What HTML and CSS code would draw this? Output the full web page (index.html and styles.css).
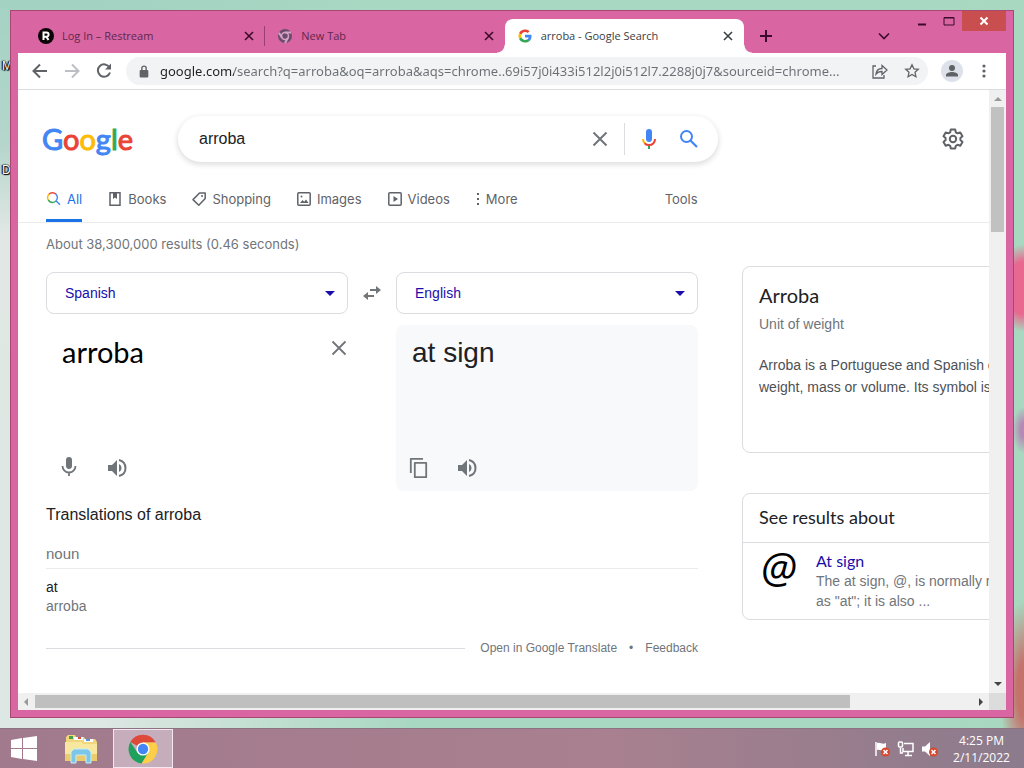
FILE: index.html
```html
<!DOCTYPE html>
<html lang="en">
<head>
    <meta charset="UTF-8">
    <meta name="viewport" content="width=device-width, initial-scale=1.0">
    <title>arroba - Google Search</title>
    <link rel="stylesheet" href="styles.css">
</head>
<body>
    <div class="desktop">
        <span class="shortcut first">M</span>
        <span class="shortcut second">D</span>

        <div class="window">
            <div class="titlebar">
                <div class="tabs">
                    <div class="tab">
                        <svg class="favicon" viewBox="0 0 16 16"><circle cx="8" cy="8" r="8" fill="#0b0508"/><path d="M5.500 12V4.500h3a2 2 0 0 1 0 4.200h-3M8.300 8.600l2.200 3.400" fill="none" stroke="#fff" stroke-width="2"/></svg>
                        <span class="name">Log In – Restream</span>
                        <button class="close" aria-label="Close tab"><svg viewBox="0 0 10 10"><path d="M1 1l8 8M9 1L1 9"/></svg></button>
                    </div>
                    <div class="tab">
                        <svg class="favicon" viewBox="0 0 16 16"><circle cx="8" cy="8" r="7" fill="#6c4c6e"/><circle cx="8" cy="8" r="3.500" fill="#6c4c6e" stroke="#d7a3c4" stroke-width="1.500"/><path d="M8 4.500h6M5 9.700L2 4.800M11 9.700L8 15" stroke="#d7a3c4"/></svg>
                        <span class="name">New Tab</span>
                        <button class="close" aria-label="Close tab"><svg viewBox="0 0 10 10"><path d="M1 1l8 8M9 1L1 9"/></svg></button>
                    </div>
                    <div class="tab active">
                        <svg class="favicon" viewBox="0 0 54 54"><path fill="#ea4335" d="M27 13.500c3.500 0 6.600 1.200 9 3.600l6.500-6.500C38.500 7 33.200 5 27 5 18 5 10.500 10 7 17l7.500 6c2-5.500 7-9.500 12.500-9.500z"/><path fill="#4285f4" d="M49 27.500c0-1.600-.2-3.200-.5-4.500H27v9h12.300c-.6 3-2.300 5.300-4.700 7l7.300 5.700C46.300 40.600 49 34.500 49 27.500z"/><path fill="#fbbc05" d="M14.500 31.500a13.500 13.500 0 0 1 0-8.500L7 17a22 22 0 0 0 0 20z"/><path fill="#34a853" d="M27 49c6 0 11-2 14.900-5.300L34.600 38c-2 1.400-4.600 2.200-7.600 2.200-5.700 0-10.600-3.700-12.500-8.700L7 37c3.600 7.200 11.200 12 20 12z"/></svg>
                        <span class="name">arroba - Google Search</span>
                        <button class="close" aria-label="Close tab"><svg viewBox="0 0 10 10"><path d="M1 1l8 8M9 1L1 9"/></svg></button>
                    </div>
                </div>
                <button class="new-tab" aria-label="New tab"><svg viewBox="0 0 12 12"><path d="M6 0v12M0 6h12"/></svg></button>
                <button class="tab-search" aria-label="Search tabs"><svg viewBox="0 0 10 6"><path d="M0 0.500l5 5 5-5"/></svg></button>
                <div class="controls">
                    <button aria-label="Minimize"><svg viewBox="0 0 12 10"><path d="M2 8.500h8" stroke-width="2"/></svg></button>
                    <button aria-label="Maximize"><svg viewBox="0 0 12 10"><path d="M1 1.500h10V9H1zM1 2h10"/></svg></button>
                    <button class="exit" aria-label="Close"><svg viewBox="0 0 12 10"><path d="M2.500 1.500l7 7M9.500 1.500l-7 7" stroke-width="2"/></svg></button>
                </div>
            </div>

            <div class="toolbar">
                <button aria-label="Back"><svg viewBox="0 0 16 16"><path d="M15 8H2M8 1.500L1.500 8 8 14.500"/></svg></button>
                <button class="off" aria-label="Forward"><svg viewBox="0 0 16 16"><path d="M1 8h13M8 1.500L14.500 8 8 14.500"/></svg></button>
                <button aria-label="Reload"><svg viewBox="0 0 16 16"><path d="M13.500 4.500A6.200 6.200 0 1 0 14 9.500"/><path d="M15 0.500v6H9z" class="solid"/></svg></button>
                <div class="omnibox">
                    <svg class="lock" viewBox="0 0 10 12"><rect x="1" y="4.500" width="8" height="7" rx="1"/><path d="M3 5V3a2 2 0 0 1 4 0v2" fill="none" stroke="#5f6368" stroke-width="1.300"/></svg>
                    <input type="text" aria-label="Address" value="google.com/search?q=arroba&amp;oq=arroba&amp;aqs=chrome..69i57j0i433i512l2j0i512l7.2288j0j7&amp;sourceid=chrome...">
                    <button aria-label="Share"><svg viewBox="0 0 16 16"><path d="M4 3H1v12h11v-3M4 11c.5-4 3-5.500 6-5.500V2.500l5 4.500-5 4.500v-3C7.500 8.500 5.500 9 4 11z" class="thin"/></svg></button>
                    <button aria-label="Bookmark"><svg viewBox="0 0 16 16"><path d="M8 1.800l1.900 4 4.400.5-3.300 3 .9 4.400L8 11.500l-3.900 2.200.9-4.400-3.300-3 4.400-.5z" class="thin"/></svg></button>
                </div>
                <button class="avatar" aria-label="Profile"><svg viewBox="0 0 22 22"><circle cx="11" cy="11" r="11" fill="#dde1ea" stroke="none"/><circle cx="11" cy="8" r="3" class="solid"/><path d="M5 16.500v-1.500c0-2 3.500-3 6-3s6 1 6 3v1.500z" class="solid"/></svg></button>
                <button aria-label="Menu"><svg viewBox="0 0 16 16"><circle cx="8" cy="3" r="1.600" class="solid"/><circle cx="8" cy="8" r="1.600" class="solid"/><circle cx="8" cy="13" r="1.600" class="solid"/></svg></button>
            </div>

            <div class="viewport">
                <div class="page">
                    <header class="header">
                        <a class="logo" href="#" aria-label="Google"><span class="b">G</span><span class="r">o</span><span class="y">o</span><span class="b">g</span><span class="g">l</span><span class="r">e</span></a>
                        <form class="search">
                            <input type="text" aria-label="Search" value="arroba">
                            <button type="reset" aria-label="Clear"><svg viewBox="0 0 24 24"><path d="M5.500 5.500l13 13M18.500 5.500l-13 13" fill="none" stroke="#70757a" stroke-width="2"/></svg></button>
                            <button type="button" class="voice" aria-label="Search by voice"><svg viewBox="0 0 24 24"><path fill="#4285f4" d="M12 15c1.700 0 3-1.300 3-3V5a3 3 0 0 0-6 0v7c0 1.700 1.300 3 3 3z"/><path fill="#34a853" d="M11 18.500h2V22h-2z"/><path fill="none" stroke="#fbbc05" stroke-width="2" d="M6 12c0 2 .8 3.500 2 4.600"/><path fill="none" stroke="#ea4335" stroke-width="2" d="M7.600 16.200C10 18.700 14 18.700 16.400 16.200 17.500 15 18 13.700 18 12"/></svg></button>
                            <button type="submit" aria-label="Search"><svg viewBox="0 0 24 24"><circle cx="9.500" cy="9.500" r="5.500" fill="none" stroke="#4285f4" stroke-width="2"/><path d="M13.500 13.500l6.500 6.500" stroke="#4285f4" stroke-width="2.200"/></svg></button>
                        </form>
                        <button class="settings" aria-label="Settings"><svg viewBox="0 0 24 24"><path d="M9.800 2.500h4.400l.6 2.800 1.800 1 2.700-.9 2.200 3.800-2.100 1.900v1.900l2.100 1.900-2.200 3.800-2.700-.9-1.800 1-.6 2.700H9.800l-.6-2.700-1.800-1-2.700.9-2.200-3.800 2.100-1.900v-1.900L2.500 9.200l2.200-3.800 2.700.9 1.800-1z" fill="none" stroke="#5f6368" stroke-width="2" stroke-linejoin="round"/><circle cx="12" cy="12" r="3.200" fill="none" stroke="#5f6368" stroke-width="2"/></svg></button>
                    </header>

                    <nav class="nav">
                        <a class="current" href="#"><svg viewBox="0 0 16 16" fill="none" stroke-width="1.500"><path d="M2.300 9A4.800 4.800 0 0 1 3 3.300" stroke="#fbbc05"/><path d="M3 3.300A4.800 4.800 0 0 1 9.800 3.100" stroke="#ea4335"/><path d="M9.800 3.100a4.800 4.800 0 0 1 .4 6.500" stroke="#4285f4"/><path d="M10.200 9.600A4.800 4.800 0 0 1 2.300 9" stroke="#34a853"/><path d="M10 9.800l4 4" stroke="#4285f4"/></svg>All</a>
                        <a href="#"><svg viewBox="0 0 16 16"><path d="M3 1.700h10v12.600H3z"/><path d="M6 2h4v6L8 6.500 6 8z" class="solid"/></svg>Books</a>
                        <a href="#"><svg viewBox="0 0 16 16"><path d="M8.500 2h5.700v5.500l-6.400 6.700L2 8.600z" stroke-linejoin="round"/><circle cx="11" cy="5" r="1" class="solid"/></svg>Shopping</a>
                        <a href="#"><svg viewBox="0 0 16 16"><rect x="1.800" y="1.800" width="12.400" height="12.400" rx="1"/><path d="M4 12l2.500-3 1.700 1.700L10 8.500l2.500 3.500z" class="solid"/><circle cx="5.500" cy="5.500" r="1" class="solid"/></svg>Images</a>
                        <a href="#"><svg viewBox="0 0 16 16"><rect x="1.800" y="1.800" width="12.400" height="12.400" rx="1"/><path d="M6.500 5v6L11 8z" class="solid"/></svg>Videos</a>
                        <a class="more" href="#"><svg viewBox="0 0 6 16"><path d="M2 2h2v2H2zM2 7h2v2H2zM2 12h2v2H2z" class="solid"/></svg>More</a>
                        <a class="tools" href="#">Tools</a>
                    </nav>

                    <div class="columns">
                        <main class="results">
                            <p class="stats">About 38,300,000 results (0.46 seconds)</p>

                            <div class="languages">
                                <div class="picker">
                                    <select aria-label="Source language"><option>Spanish</option></select>
                                    <svg viewBox="0 0 10 5"><path d="M0 0h10L5 5z"/></svg>
                                </div>
                                <button class="swap" aria-label="Swap languages"><svg viewBox="0 0 20 16"><path d="M8 4h6V1l5 4-5 4V6H8zM12 10H6V7l-5 4 5 4v-3h6z"/></svg></button>
                                <div class="picker">
                                    <select aria-label="Target language"><option>English</option></select>
                                    <svg viewBox="0 0 10 5"><path d="M0 0h10L5 5z"/></svg>
                                </div>
                            </div>

                            <div class="translate">
                                <div class="source">
                                    <div class="entry">
                                        <textarea aria-label="Text to translate" rows="1">arroba</textarea>
                                        <button aria-label="Clear text"><svg viewBox="0 0 24 24"><path d="M5.500 5.500l13 13M18.500 5.500l-13 13" fill="none" stroke="#70757a" stroke-width="1.800"/></svg></button>
                                    </div>
                                    <div class="actions">
                                        <button aria-label="Speak"><svg viewBox="0 0 24 24"><path d="M12 13c1.700 0 3-1.300 3-3V4a3 3 0 0 0-6 0v6c0 1.700 1.300 3 3 3z"/><path d="M5.500 10a6.500 6.500 0 0 0 13 0M12 16v4" fill="none" stroke="#70757a" stroke-width="1.800"/></svg></button>
                                        <button aria-label="Listen"><svg viewBox="0 0 24 24"><path d="M3 9v6h4l5 5V4L7 9zM14 8v8c1.500-.7 2.500-2.200 2.500-4S15.500 8.700 14 8z"/><path d="M14 4c4 1 6.500 4 6.500 8s-2.500 7-6.500 8" fill="none" stroke="#70757a" stroke-width="2"/></svg></button>
                                    </div>
                                </div>
                                <div class="target">
                                    <div class="output">at sign</div>
                                    <div class="actions">
                                        <button aria-label="Copy"><svg viewBox="0 0 24 24"><path d="M3.800 17V2.800H16M7.800 6.800h11.400v14.400H7.800z" fill="none" stroke="#70757a" stroke-width="1.800" stroke-linejoin="round"/></svg></button>
                                        <button aria-label="Listen"><svg viewBox="0 0 24 24"><path d="M3 9v6h4l5 5V4L7 9zM14 8v8c1.500-.7 2.500-2.200 2.500-4S15.500 8.700 14 8z"/><path d="M14 4c4 1 6.500 4 6.500 8s-2.500 7-6.500 8" fill="none" stroke="#70757a" stroke-width="2"/></svg></button>
                                    </div>
                                </div>
                            </div>

                            <h3 class="subtitle">Translations of arroba</h3>
                            <p class="kind">noun</p>
                            <dl class="words">
                                <dt>at</dt>
                                <dd>arroba</dd>
                            </dl>
                            <div class="links">
                                <a href="#">Open in Google Translate</a>
                                <span>•</span>
                                <a href="#">Feedback</a>
                            </div>
                        </main>

                        <aside class="side">
                            <section class="card about">
                                <h2>Arroba</h2>
                                <p class="type">Unit of weight</p>
                                <p class="text">Arroba is a Portuguese and Spanish custom unit of weight, mass or volume. Its symbol is @.</p>
                            </section>
                            <section class="card related">
                                <h2>See results about</h2>
                                <div class="item">
                                    <div class="thumb">@</div>
                                    <div>
                                        <a href="#">At sign</a>
                                        <p>The at sign, @, is normally read aloud<br>as "at"; it is also ...</p>
                                    </div>
                                </div>
                            </section>
                        </aside>
                    </div>
                </div>

                <div class="scroll vertical">
                    <svg class="dim" viewBox="0 0 8 4"><path d="M0 4h8L4 0z"/></svg>
                    <div class="track"><div class="bar"></div></div>
                    <svg viewBox="0 0 8 4"><path d="M0 0h8L4 4z"/></svg>
                </div>
                <div class="scroll horizontal">
                    <svg class="dim" viewBox="0 0 4 8"><path d="M4 0v8L0 4z"/></svg>
                    <div class="track"><div class="bar"></div></div>
                    <svg viewBox="0 0 4 8"><path d="M0 0v8l4-4z"/></svg>
                </div>
                <div class="corner"></div>
            </div>
        </div>
    </div>

    <footer class="taskbar">
        <button class="start" aria-label="Start"><svg viewBox="0 0 28 28"><path d="M1 5l11-2v10H1zM13 3l14-2v12H13zM1 14h11v10L1 22zM13 14h14v12l-14-2z" fill="#fff"/></svg></button>
        <button class="files" aria-label="File Explorer"><svg viewBox="0 0 32 30"><path d="M1 3l2-2h7l1 2h8l1 2h10l2 3v18H1z" fill="#f0d67c"/><path d="M4 2h4v3H4z" fill="#4b9e4a"/><path d="M9 3h9v3H9z" fill="#fff"/><path d="M13 3h3v2h-3z" fill="#d5533d"/><path d="M19 5h9v3h-9z" fill="#fff"/><path d="M21 5h4v2h-4z" fill="#5a96d5"/><path d="M0 8h16l2 2h14v17H0z" fill="#f8e79f"/><path d="M0 20h32v7H0z" fill="#eccb6b"/><path d="M6 29V18l3-3h14l3 3v11h-5v-8H11v8z" fill="#7cc7e8" stroke="#c9ecf8"/></svg></button>
        <button class="chrome" aria-label="Google Chrome"><svg viewBox="0 0 32 32"><path d="M16 16L2.500 8.500A15.500 15.500 0 0 1 29.600 9L16 9z" fill="#de4a3a"/><path d="M2.500 8.500a15.500 15.500 0 0 0 12 23L22 19.500 16 16 9.900 19.500z" fill="#1fa05c"/><path d="M29.600 9H16l6 10.500-7.500 12A15.500 15.500 0 0 0 29.600 9z" fill="#fdce47"/><circle cx="16" cy="16" r="7" fill="#fff"/><circle cx="16" cy="16" r="5.500" fill="#4285f4"/></svg></button>
        <div class="tray">
            <svg viewBox="0 0 18 18"><path d="M3 2v14" stroke="#fff" stroke-width="1.500"/><path d="M4 3c4-1 5 2 9 0v7c-4 2-5-1-9 0z" fill="#fff"/><circle cx="12.500" cy="12" r="4.500" fill="#d8472f"/><path d="M10.500 10l4 4M14.500 10l-4 4" stroke="#fff" stroke-width="1.500"/></svg>
            <svg viewBox="0 0 18 18" fill="none" stroke="#fff" stroke-width="1.500"><path d="M7 3.500h9v8H6V8M8 15.500h7M11 12v3M3.500 8v5H6"/><rect x="1.500" y="2" width="4" height="5" rx="1"/></svg>
            <svg viewBox="0 0 18 18"><path d="M1 6.500h3L9 2v14l-5-4.500H1z" fill="#fff"/><circle cx="12.500" cy="12" r="4.500" fill="#d8472f"/><path d="M10.500 10l4 4M14.500 10l-4 4" stroke="#fff" stroke-width="1.500"/></svg>
        </div>
        <div class="clock"><span>4:25 PM</span><span>2/11/2022</span></div>
    </footer>
</body>
</html>
```
FILE: styles.css
```css
* {
    box-sizing: border-box;
}
body {
    margin: 0;
    height: 100vh;
    display: flex;
    flex-direction: column;
    font-family: "Liberation Sans", Arial, sans-serif;
    font-size: 14px;
    color: #202124;
}
button {
    display: flex;
    align-items: center;
    justify-content: center;
    padding: 0;
    border: 0;
    background: none;
}
input, select, textarea {
    border: 0;
    outline: 0;
    background: none;
    font-family: inherit;
}
a {
    text-decoration: none;
}
h2, h3, p, dl, dd {
    margin: 0;
    font-weight: normal;
}

/* desktop */
.desktop {
    position: relative;
    flex: 1;
    min-height: 0;
    padding: 10px;
    background:
        radial-gradient(ellipse 30px 44px at 100% 288px, #e8698f 60%, transparent),
        radial-gradient(ellipse 12px 24px at 100% 430px, #b58ab5 30%, transparent),
        radial-gradient(ellipse 24px 90px at 100% 690px, #c4736c 30%, transparent),
        linear-gradient(to right, transparent 90%, #a8d9c0 98%),
        linear-gradient(to right, transparent 10%, #a9d8c2 40%),
        linear-gradient(#a3d2c3 0%, #b5d6cc 20%, #e0e7e4 32%, #dde7e3 100%);
}
.shortcut {
    position: absolute;
    left: 2px;
    font-size: 12px;
    line-height: 16px;
    color: #fff;
    text-shadow: 0 0 1px #000, 0 0 2px #000, 1px 1px 1px #000, -1px 0 1px #000;
}
.first {
    top: 58px;
}
.second {
    top: 162px;
}
.window {
    position: relative;
    height: 100%;
    display: flex;
    flex-direction: column;
    padding: 0 7px 7px;
    border: 1px solid #a6486f;
    background: #d966a3;
}

/* tab strip */
.titlebar {
    display: flex;
    height: 42px;
    font-family: "Open Sans", "Noto Sans", sans-serif;
    font-size: 11px;
    color: #62264b;
}
.titlebar svg {
    fill: none;
    stroke: #3c0b2b;
    stroke-width: 2;
}
.titlebar .favicon {
    width: 16px;
    height: 16px;
    stroke: none;
}
.tabs {
    display: flex;
    flex: 0 1 726px;
    padding: 8px 0 0 8px;
    min-width: 0;
}
.tab {
    display: flex;
    flex: 1;
    align-items: center;
    gap: 8px;
    padding: 0 10px 1px 12px;
    white-space: nowrap;
}
.tab:first-child {
    background: linear-gradient(#9c3f73, #9c3f73) right center / 1px 20px no-repeat;
}
.tab .name {
    flex: 1;
}
.tab.active {
    position: relative;
    background: #fff;
    border-radius: 8px 8px 0 0;
    color: #3c4043;
}
/* curved feet of the active tab */
.tab.active::before,
.tab.active::after {
    content: "";
    position: absolute;
    bottom: 0;
    width: 8px;
    height: 8px;
}
.tab.active::before {
    right: 100%;
    background: radial-gradient(circle at 0 0, transparent 7px, #fff 8px);
}
.tab.active::after {
    left: 100%;
    background: radial-gradient(circle at 100% 0, transparent 7px, #fff 8px);
}
.close svg {
    width: 10px;
    height: 10px;
    margin: 1px;
}
.titlebar .close svg {
    stroke-width: 1.6;
}
.tab.active .close svg {
    stroke: #3c4043;
}
.new-tab {
    width: 44px;
    padding-top: 8px;
}
.new-tab svg {
    width: 12px;
    height: 12px;
}
.tab-search {
    width: 24px;
    margin-left: auto;
    padding-top: 8px;
}
.tab-search svg {
    width: 10px;
    height: 6px;
    overflow: visible;
}
.titlebar .tab-search svg {
    stroke-width: 1.6;
}
.controls {
    display: flex;
    height: 20px;
    margin-left: 12px;
}
.controls button {
    width: 27px;
}
.controls svg {
    width: 12px;
    height: 10px;
    stroke-width: 1;
}
.controls .exit {
    width: 44px;
    background: #c84e50;
}
.controls .exit svg {
    stroke: #fff;
}

/* toolbar */
.toolbar {
    display: flex;
    align-items: center;
    height: 37px;
    padding: 0 6px;
    background: #fff;
    border-bottom: 1px solid #dadce0;
}
.toolbar button {
    width: 32px;
    height: 28px;
}
.toolbar svg {
    width: 16px;
    height: 16px;
    fill: none;
    stroke: #5f6368;
    stroke-width: 2;
}
.toolbar .off svg {
    stroke: #bcbfc3;
}
.toolbar .thin {
    stroke-width: 1.3;
}
.toolbar .solid {
    fill: #5f6368;
    stroke: none;
}
.omnibox {
    display: flex;
    flex: 1;
    align-items: center;
    height: 28px;
    margin: 0 8px 0 6px;
    padding-left: 12px;
    border-radius: 14px;
    background: #f1f3f4;
    min-width: 0;
}
.omnibox .lock {
    width: 12px;
    height: 13px;
    fill: #5f6368;
    stroke: none;
}
.omnibox input {
    flex: 1;
    min-width: 0;
    padding: 0;
    margin-left: 10px;
    font-family: "Noto Sans", "Open Sans", sans-serif;
    font-size: 13px;
    /* host dark, rest of the address grey */
    background: linear-gradient(to right, #202124 74px, #6b6f74 74px);
    -webkit-background-clip: text;
    background-clip: text;
    -webkit-text-fill-color: transparent;
}
.toolbar .avatar svg {
    width: 22px;
    height: 22px;
}

/* page and scroll bars */
.viewport {
    flex: 1;
    min-height: 0;
    display: grid;
    grid-template: minmax(0, 1fr) 17px / minmax(0, 1fr) 17px;
    background: #fff;
}
.page {
    overflow: hidden;
    padding-top: 26px;
}
.scroll {
    display: flex;
    align-items: center;
    justify-content: space-between;
    background: #f0f0f0;
}
.scroll svg {
    width: 8px;
    height: 8px;
    fill: #444;
}
.scroll .dim {
    fill: #999;
}
.scroll .track {
    flex: 1;
}
.vertical {
    flex-direction: column;
    padding: 5px 2px;
}
.vertical .track {
    width: 100%;
    margin: 4px 0;
}
.vertical .bar {
    height: 22%;
    background: #c1c1c1;
}
.horizontal {
    padding: 2px 4px;
}
.horizontal .track {
    height: 100%;
    margin: 0 5px;
}
.horizontal .bar {
    width: 87%;
    height: 13px;
    background: #bfbfbf;
}
.corner {
    background: #dcdcdc;
}

/* search header */
.header {
    display: flex;
    align-items: center;
    height: 46px;
    padding: 0 24px;
}
.logo {
    width: 136px;
    font-family: Lato, sans-serif;
    font-size: 29px;
    line-height: 44px;
    -webkit-text-stroke: 1px;
}
.b { color: #4285f4; }
.r { color: #ea4335; }
.y { color: #fbbc05; }
.g { color: #34a853; }
.search {
    display: flex;
    align-items: center;
    width: 540px;
    height: 46px;
    padding: 0 9px 0 21px;
    border-radius: 23px;
    box-shadow: 0 2px 5px 1px rgba(64, 60, 67, .16);
}
.search input {
    flex: 1;
    min-width: 0;
    padding: 0;
    font-size: 16px;
    color: #202124;
}
.search button {
    width: 40px;
    height: 32px;
    margin-right: 4px;
}
.search .voice {
    width: 48px;
    margin-right: -3px;
    border-left: 1px solid #dadce0;
}
.search button:last-child {
    margin-right: 0;
}
.search svg, .settings svg {
    width: 24px;
    height: 24px;
}
.settings {
    margin-left: auto;
}
.nav {
    display: flex;
    height: 61px;
    padding: 14px 28px 0;
    border-bottom: 1px solid #ebebeb;
    font-family: Inter, Lato, sans-serif;
    font-size: 13px;
}
.nav a {
    display: flex;
    align-items: center;
    gap: 5px;
    height: 46px;
    margin-right: 25px;
    padding-top: 2px;
    border-bottom: 3px solid transparent;
    color: #5f6368;
}
.nav .current {
    color: #1a73e8;
    border-color: #1a73e8;
}
.nav svg {
    width: 16px;
    height: 16px;
    fill: none;
    stroke: #5f6368;
    stroke-width: 1.5;
}
.nav .current svg {
    stroke: none;
}
.nav .solid {
    fill: #5f6368;
    stroke: none;
}
.nav .more svg {
    width: 6px;
}
.nav .tools {
    margin-left: 122px;
}

/* results */
.columns {
    display: flex;
    gap: 44px;
    padding-left: 28px;
}
.results {
    flex: 0 0 652px;
}
.stats {
    height: 49px;
    font-family: Inter, Lato, sans-serif;
    font-size: 13px;
    line-height: 42px;
    color: #70757a;
}
.languages, .translate {
    display: grid;
    grid-template-columns: minmax(0, 1fr) 48px minmax(0, 1fr);
}
.picker {
    display: grid;
    align-items: center;
}
.picker select, .picker svg {
    grid-area: 1 / 1;
}
.picker select {
    width: 100%;
    height: 42px;
    padding: 0 18px;
    border: 1px solid #dadce0;
    border-radius: 8px;
    appearance: none;
    font-size: 14px;
    color: #1a0dab;
}
.picker svg {
    justify-self: end;
    width: 10px;
    height: 5px;
    margin-right: 13px;
    fill: #1a0dab;
    pointer-events: none;
}
.swap svg {
    width: 20px;
    height: 16px;
    fill: #70757a;
}
.translate {
    padding-top: 11px;
}
.source, .target {
    display: flex;
    flex-direction: column;
    justify-content: space-between;
    height: 166px;
    padding: 11px 0 11px 16px;
}
.target {
    grid-column: 3;
    background: #f8f9fa;
    border-radius: 8px;
}
.entry {
    display: flex;
    justify-content: space-between;
}
.entry textarea {
    flex: 1;
    min-width: 0;
    height: 34px;
    padding: 0;
    resize: none;
    overflow: hidden;
    font-family: Lato, sans-serif;
    font-size: 29px;
    line-height: 32px;
    color: #000;
}
.entry button {
    width: 18px;
    height: 24px;
}
.output {
    font-size: 28px;
    line-height: 34px;
}
.actions {
    display: flex;
    gap: 24px;
    margin-left: -5px;
}
.actions svg, .entry svg {
    flex: none;
    width: 24px;
    height: 24px;
    fill: #70757a;
}
.subtitle {
    padding-top: 14px;
    font-size: 16px;
    line-height: 20px;
}
.kind {
    padding: 18px 0 3px;
    border-bottom: 1px solid #ebebeb;
    font-size: 15px;
    line-height: 22px;
    color: #70757a;
}
.words {
    padding: 9px 0 22px;
    line-height: 19px;
}
.words dd {
    color: #70757a;
}
.links {
    display: flex;
    align-items: center;
    gap: 12px;
    font-size: 12px;
    line-height: 20px;
    color: #70757a;
}
.links::before {
    content: "";
    flex: 1;
    height: 1px;
    margin-right: 3px;
    background: #dadce0;
}
.links a {
    color: #70757a;
}

/* side cards */
.side {
    flex: 0 0 369px;
    padding-top: 43px;
}
.card {
    border: 1px solid #dadce0;
    border-radius: 8px;
}
.card h2 {
    font-family: Lato, sans-serif;
}
.about {
    height: 187px;
    margin-bottom: 40px;
    padding: 14px 16px;
}
.about h2 {
    font-size: 20px;
    line-height: 28px;
}
.about .type {
    padding: 4px 0 19px;
    line-height: 22px;
    color: #70757a;
}
.about .text {
    line-height: 22px;
    color: #4d5156;
}
.related h2 {
    padding: 0 16px 2px;
    border-bottom: 1px solid #dadce0;
    font-size: 18px;
    line-height: 46px;
}
.item {
    display: flex;
    gap: 12px;
    padding: 8px 0 8px 16px;
}
.item a {
    font-family: Lato, sans-serif;
    font-size: 16px;
    line-height: 20px;
    color: #1a0dab;
}
.item p {
    line-height: 20px;
    color: #70757a;
}
.thumb {
    width: 45px;
    padding-left: 2px;
    font-family: "Open Sans", sans-serif;
    font-size: 42px;
    font-style: italic;
    line-height: 32px;
    color: #000;
}

/* taskbar */
.taskbar {
    display: flex;
    align-items: center;
    height: 40px;
    border-top: 1px solid #8c7381;
    background: linear-gradient(to right, #a17a8d, #a8808f 60%, #8b7b8c);
}
.start {
    width: 48px;
}
.start svg {
    width: 28px;
    height: 28px;
}
.files {
    width: 65px;
}
.files svg, .chrome svg {
    width: 32px;
    height: 30px;
}
.chrome {
    width: 60px;
    height: 39px;
    border: 1px solid #f3e8ef;
    background: #c6adbb;
}
.tray {
    display: flex;
    gap: 6px;
    margin-left: auto;
}
.tray svg {
    width: 18px;
    height: 18px;
}
.clock {
    display: flex;
    flex-direction: column;
    width: 85px;
    font-family: "Open Sans", "Noto Sans", sans-serif;
    font-size: 12px;
    line-height: 17px;
    text-align: center;
    color: #fff;
}
```
